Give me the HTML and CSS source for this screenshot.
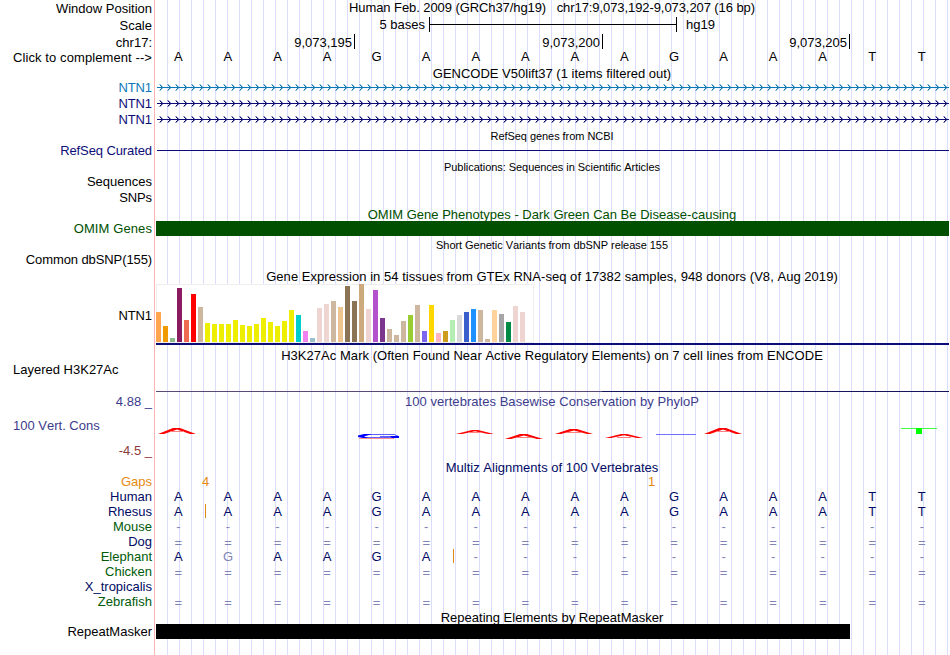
FILE: index.html
```html
<!DOCTYPE html>
<html lang="en">
<head>
    <meta charset="UTF-8">
    <title>Human chr17:9,073,192-9,073,207 Genome Browser</title>
    <link rel="stylesheet" href="styles.css">
</head>
<body>
    <svg class="defs" width="0" height="0">
        <defs>
            <pattern id="arrows-blue" width="8" height="7" patternUnits="userSpaceOnUse">
                <path d="M4 2h1v1h-1zM4 4h1v1h-1zM3 1h1v1h-1zM3 5h1v1h-1z" fill="#0c78b8"/>
                <path d="M2 0h1v1h-1zM2 6h1v1h-1zM3 0h1v1h-1zM3 6h1v1h-1zM4 1h1v1h-1zM4 5h1v1h-1zM5 2h1v1h-1zM5 4h1v1h-1z" fill="#0c78b8" opacity="0.4"/>
            </pattern>
            <pattern id="arrows-navy" width="8" height="7" patternUnits="userSpaceOnUse">
                <path d="M4 2h1v1h-1zM4 4h1v1h-1zM3 1h1v1h-1zM3 5h1v1h-1z" fill="#0c0c78"/>
                <path d="M2 0h1v1h-1zM2 6h1v1h-1zM3 0h1v1h-1zM3 6h1v1h-1zM4 1h1v1h-1zM4 5h1v1h-1zM5 2h1v1h-1zM5 4h1v1h-1z" fill="#0c0c78" opacity="0.4"/>
            </pattern>
        </defs>
    </svg>

    <div class="browser">
        <div class="row h17"><div class="label">Window Position</div><div class="track title position">Human Feb. 2009 (GRCh37/hg19) &nbsp; chr17:9,073,192-9,073,207 (16 bp)</div></div>
        <div class="row h17">
            <div class="label">Scale</div>
            <div class="track scale"><span class="scale-size">5 bases</span><span class="scale-bar"></span><span>hg19</span></div>
        </div>
        <div class="row h16">
            <div class="label low">chr17:</div>
            <div class="track ruler"><span class="tick first">9,073,195</span><span class="tick">9,073,200</span><span class="tick last">9,073,205</span></div>
        </div>
        <div class="row h15 strand"><div class="label click">Click to complement --&gt;</div><div class="track bases" data-seq="AAAAGAAAAAGAAATT"></div></div>

        <div class="row h15"><div class="label"></div><div class="track title gencode">GENCODE V50lift37 (1 items filtered out)</div></div>
        <div class="row h16 blue">
            <div class="label tight">NTN1</div>
            <svg class="track gene" width="793" height="16"><g transform="translate(1 4)"><rect width="792" height="7" fill="url(#arrows-blue)"/><rect y="3" width="792" height="1" fill="#0c78b8"/></g></svg>
        </div>
        <div class="row h16 navy">
            <div class="label tight">NTN1</div>
            <svg class="track gene" width="793" height="16"><g transform="translate(1 4)"><rect width="792" height="7" fill="url(#arrows-navy)"/><rect y="3" width="792" height="1" fill="#0c0c78"/></g></svg>
        </div>
        <div class="row h16 navy">
            <div class="label tight">NTN1</div>
            <svg class="track gene" width="793" height="16"><g transform="translate(1 4)"><rect width="792" height="7" fill="url(#arrows-navy)"/><rect y="3" width="792" height="1" fill="#0c0c78"/></g></svg>
        </div>

        <div class="row h15"><div class="label"></div><div class="track title small low">RefSeq genes from NCBI</div></div>
        <div class="row h16 navy"><div class="label tight">RefSeq Curated</div><div class="track"><div class="refseq-line"></div></div></div>
        <div class="row h15"><div class="label"></div><div class="track title small low">Publications: Sequences in Scientific Articles</div></div>
        <div class="row h16"><div class="label">Sequences</div></div>
        <div class="row h16"><div class="label tight">SNPs</div></div>
        <div class="row h15 omim"><div class="label"></div><div class="track title low">OMIM Gene Phenotypes - Dark Green Can Be Disease-causing</div></div>
        <div class="row h15 omim"><div class="label wide">OMIM Genes</div><div class="track omim-bar"></div></div>
        <div class="row h16"><div class="label"></div><div class="track title small low">Short Genetic Variants from dbSNP release 155</div></div>
        <div class="row h16"><div class="label tight">Common dbSNP(155)</div></div>

        <div class="row h16"><div class="label"></div><div class="track title low spaced">Gene Expression in 54 tissues from GTEx RNA-seq of 17382 samples, 948 donors (V8, Aug 2019)</div></div>
        <div class="row gtex">
            <div class="label tight">NTN1</div>
            <div class="track gtex-track"><div class="gtex-bars" id="gtex-bars"></div></div>
        </div>

        <div class="row h17"><div class="label"></div><div class="track title low spaced">H3K27Ac Mark (Often Found Near Active Regulatory Elements) on 7 cell lines from ENCODE</div></div>
        <div class="row layered"><div class="label left">Layered H3K27Ac</div><div class="track layered-line"></div></div>

        <div class="row phylop-head"><div class="label limit">4.88 _</div><div class="track title spaced">100 vertebrates Basewise Conservation by PhyloP</div></div>
        <div class="row phylop">
            <div class="phylop-labels">
                <div class="label left">100 Vert. Cons</div>
                <div class="label limit low-limit">-4.5 _</div>
            </div>
            <svg class="track" width="793" height="49" viewBox="156 410 793 49">
                <g fill="#ff0000">
                    <path d="M158 434L173 428H180L196 434H190L177 429.5L164 434Z"/>
                    <path d="M456 434L472 430H478L494 434H488L475 431.2L462 434Z"/>
                    <path d="M505 439L520 434H527L543 439H537L524 435.5L511 439Z"/>
                    <path d="M555 434L570 429H577L593 434H587L574 430.5L561 434Z"/>
                    <path d="M605 438L621 434H627L643 438H637L624 435.2L611 438Z"/>
                    <path d="M704 434L719 428H726L742 434H736L723 429.5L710 434Z"/>
                </g>
                <path d="M170 431.5H184M468 432.5H482M517 437.5H531M567 432.5H581M617 437.5H631M716 431.5H730" stroke="#ff8080"/>
                <path d="M359 438.5H394" stroke="#ff9090"/>
                <path d="M365 434.5H394L398 436M380 436.5H398M365 437.5H398" stroke="#6060ff" fill="none"/>
                <path d="M358 435.5L364 434H372L364 436.5L368 438H363L358 437Z" fill="#0000ff"/>
                <path d="M390 436H399V438H392Z" fill="#0000ff"/>
                <path d="M656 434.5H696" stroke="#7070ff"/>
                <path d="M901 428.5H937" stroke="#40ff40"/>
                <rect x="916" y="428" width="6" height="6" fill="#00ff00"/>
            </svg>
        </div>

        <div class="row h15 species"><div class="label"></div><div class="track title multiz">Multiz Alignments of 100 Vertebrates</div></div>
        <div class="row h15 gaps"><div class="label">Gaps</div><div class="track gap-counts"><span class="gap-one">4</span><span class="gap-two">1</span></div></div>
        <div class="row h15 species"><div class="label">Human</div><div class="track bases" data-seq="AAAAGAAAAAGAAATT"></div></div>
        <div class="row h15 species"><div class="label">Rhesus</div><div class="track bases" data-seq="AAAAGAAAAAGAAATT" data-insert="1"></div></div>
        <div class="row h15 species"><div class="label green">Mouse</div><div class="track bases" data-seq="----------------"></div></div>
        <div class="row h15 species"><div class="label">Dog</div><div class="track bases" data-seq="================"></div></div>
        <div class="row h15 species"><div class="label green">Elephant</div><div class="track bases" data-seq="AgAAGA----------" data-insert="6"></div></div>
        <div class="row h15 species"><div class="label green">Chicken</div><div class="track bases" data-seq="================"></div></div>
        <div class="row h15 species"><div class="label">X_tropicalis</div></div>
        <div class="row h15 species"><div class="label green">Zebrafish</div><div class="track bases" data-seq="================"></div></div>

        <div class="row h15"><div class="label"></div><div class="track title rmsk-title">Repeating Elements by RepeatMasker</div></div>
        <div class="row h15"><div class="label">RepeatMasker</div><div class="track"><div class="rmsk-bar"></div></div></div>
    </div>

    <script>
        // one cell per base; lower case = mismatch with the reference
        document.querySelectorAll('.bases').forEach(function (row) {
            row.dataset.seq.split('').forEach(function (base, i) {
                const cell = document.createElement('span');
                cell.className = 'base';
                if (base === '-') cell.classList.add('gap');
                if (base === '=') cell.classList.add('unaligned');
                if (base === 'g') cell.classList.add('mismatch');
                if (row.dataset.insert === String(i)) cell.classList.add('insert');
                cell.textContent = base.toUpperCase();
                row.appendChild(cell);
            });
        });

        // [height, color] for each tissue
        const tissues = [
            [30, '#ffa54f'], [16, '#ee9a00'], [4, '#8fbc8f'], [54, '#8b1c62'], [22, '#ee6a50'], [48, '#ff0000'],
            [35, '#cdb79e'], [19, '#eeee00'], [18, '#eeee00'], [18, '#eeee00'], [18, '#eeee00'], [22, '#eeee00'],
            [17, '#eeee00'], [16, '#eeee00'], [18, '#eeee00'], [24, '#eeee00'], [20, '#eeee00'], [16, '#eeee00'],
            [21, '#eeee00'], [32, '#eeee00'], [27, '#00cdcd'], [11, '#ee82ee'], [4, '#9ac0cd'], [34, '#eed5d2'],
            [38, '#eed5d2'], [41, '#cdb79e'], [35, '#eec591'], [56, '#8b7355'], [41, '#8b7355'], [58, '#cdaa7d'],
            [33, '#eed5d2'], [52, '#b452cd'], [24, '#7a378b'], [13, '#cdb79e'], [7, '#cdb79e'], [21, '#cdb79e'],
            [27, '#9acd32'], [37, '#cdb79e'], [11, '#7a67ee'], [37, '#ffd700'], [9, '#ffb6c1'], [11, '#cd9b1d'],
            [22, '#b4eeb4'], [27, '#d9d9d9'], [30, '#3a5fcd'], [33, '#1e90ff'], [32, '#cdb79e'], [3, '#cdb79e'],
            [32, '#ffd39b'], [28, '#a6a6a6'], [20, '#008b45'], [36, '#eed5d2'], [30, '#eed5d2'], [0, '#ff00ff']
        ];
        const bars = document.getElementById('gtex-bars');
        tissues.forEach(function (tissue) {
            const bar = document.createElement('div');
            bar.className = 'gtex-bar';
            bar.style.height = tissue[0] + 'px';
            bar.style.backgroundColor = tissue[1];
            bars.appendChild(bar);
        });
    </script>
</body>
</html>
```

FILE: styles.css
```css
body {
    margin: 0;
    background-color: #fff;
    color: #000;
    font-family: "Liberation Sans", Arial, sans-serif;
    font-size: 13px;
    font-kerning: none;
    overflow: hidden;
}
.defs {
    display: block;
}
.browser {
    width: 949px;
    height: 655px;
    /* pink divider, then a guide line every 12px */
    background-image:
        linear-gradient(to right, #fff 154px, #ffb4b4 154px, #ffb4b4 155px, #fff 155px, #fff 160px, transparent 160px),
        repeating-linear-gradient(to right, transparent 0, transparent 11px, #dcdcff 11px, #dcdcff 12px);
}
.row {
    display: flex;
    justify-content: flex-start;
    white-space: nowrap;
}
.h15 {
    height: 15px;
    line-height: 15px;
}
.h16 {
    height: 16px;
    line-height: 16px;
}
.h17 {
    height: 17px;
    line-height: 17px;
}
.label {
    flex: none;
    box-sizing: border-box;
    width: 156px;
    padding-right: 4px;
    text-align: right;
}
.label.left {
    padding-left: 13px;
    text-align: left;
}
.label.tight {
    letter-spacing: -0.1px;
}
.label.click {
    letter-spacing: 0.09px;
}
.label.wide {
    letter-spacing: 0.1px;
}
.track {
    flex: none;
    width: 793px;
}
.title {
    box-sizing: border-box;
    padding-right: 1px;
    text-align: center;
}
.title.small {
    font-size: 11px;
    letter-spacing: -0.05px;
}
.title.spaced {
    letter-spacing: 0.04px;
}
.low {
    padding-top: 1px;
}
.position {
    line-height: 15px;
    letter-spacing: -0.08px;
}
.gencode {
    line-height: 17px;
}
.blue {
    color: #0c78b8;
}
.navy {
    color: #0c0c78;
}

/* ruler */
.scale {
    display: flex;
    line-height: 15px;
}
.scale-size {
    width: 269px;
    margin-right: 4px;
    text-align: right;
}
.scale-bar {
    box-sizing: border-box;
    width: 248px;
    height: 15px;
    margin-right: 9px;
    border-left: 1px solid #000;
    border-right: 1px solid #000;
    background: linear-gradient(#000, #000) 0 7px / 100% 1px no-repeat;
}
.ruler {
    display: flex;
    line-height: 17px;
}
.tick {
    box-sizing: border-box;
    width: 248px;
    height: 15px;
    padding-right: 2px;
    border-right: 1px solid #000;
    text-align: right;
}
.tick.first {
    width: 199px;
}
.tick.last {
    width: 247px;
}

/* sequence rows */
.bases {
    display: flex;
    margin-left: -2.4px;
}
.base {
    flex: 1;
    text-align: center;
}
.strand .bases {
    line-height: 13px;
}
.gap,
.unaligned,
.mismatch {
    color: #7f84b4;
}
.unaligned {
    padding-top: 1px;
}
.insert {
    background: linear-gradient(#e08a10, #e08a10) 2px 0 / 1px 14px no-repeat;
}

.refseq-line {
    height: 1px;
    margin: 7px 0 0 1px;
    background-color: #0c0c78;
}
.omim {
    color: #005000;
}
.omim-bar {
    background-color: #005000;
}

/* GTEx bar chart */
.gtex {
    height: 62px;
    line-height: 63px;
}
.gtex-track {
    box-sizing: border-box;
    height: 61px;
    border-bottom: 2px solid #0c0c78;
}
.gtex-bars {
    display: flex;
    align-items: flex-end;
    gap: 2px;
    box-sizing: border-box;
    width: 378px;
    height: 59px;
    padding-bottom: 1px;
    background-color: #fff;
    box-shadow: inset 0 0 0 1px #eee;
}
.gtex-bar {
    flex: none;
    width: 5px;
}

.layered {
    height: 29px;
    line-height: 14px;
}
.layered-line {
    height: 29px;
    background: linear-gradient(to right, #5a4a78 446px, #14145a 446px) 0 100% / 100% 1px no-repeat;
}

/* PhyloP conservation */
.phylop-head {
    height: 18px;
    line-height: 19px;
    color: #3c3c8c;
}
.phylop {
    height: 49px;
    color: #3c3c8c;
}
.phylop-labels {
    padding-top: 8px;
    line-height: 16px;
}
.low-limit {
    margin-top: 9px;
    color: #8c3c3c;
}

/* Multiz alignment */
.species {
    color: #000a64;
}
.multiz {
    line-height: 18px;
}
.green {
    color: #005a0a;
}
.gaps {
    color: #e68a10;
}
.gap-counts {
    display: flex;
}
.gap-one {
    width: 446px;
    padding-left: 46px;
}
.rmsk-title {
    line-height: 17px;
}
.rmsk-bar {
    width: 694px;
    height: 15px;
    background-color: #000;
}
```
